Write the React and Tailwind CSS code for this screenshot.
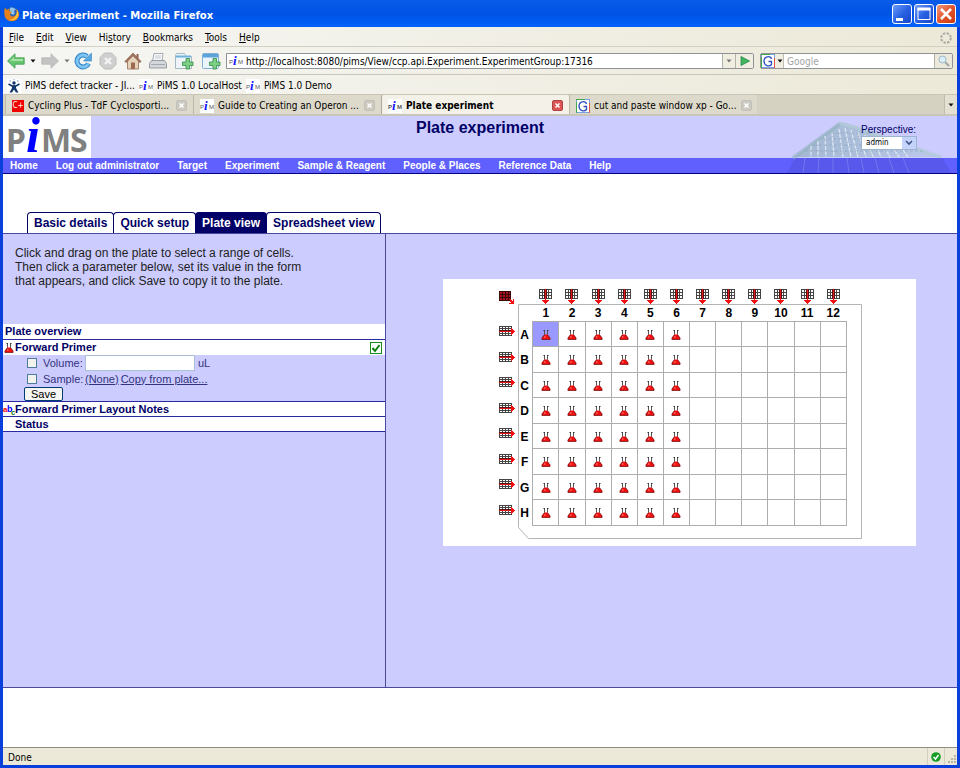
import React from "react";

const chromeFont = "font-['DejaVu_Sans_Condensed','DejaVu_Sans',sans-serif]";

const navLinks = [
  "Home",
  "Log out administrator",
  "Target",
  "Experiment",
  "Sample & Reagent",
  "People & Places",
  "Reference Data",
  "Help",
];

const columns = [1, 2, 3, 4, 5, 6, 7, 8, 9, 10, 11, 12];
const rows = ["A", "B", "C", "D", "E", "F", "G", "H"];

function Firefox() {
  return (
    <svg viewBox="0 0 16 16" className="h-4 w-4 shrink-0">
      <circle cx="8" cy="8" r="7" fill="#2c62b5" />
      <path d="M6 2c2-1 5 0 6 2-1 0-2 0-2 1 1 1 1 3-1 4L6 7z" fill="#8fc4ee" />
      <path
        d="M1 2c1 0 1 1 2 2 1-1 2-1 3-1L5 5l3 1-2 2c0 3 4 3 6 1 1-1 1-4 0-6 3 2 4 6 2 9-3 5-11 4-13-1C0 8 0 4 1 2z"
        fill="#e8801c"
      />
      <path d="M13 4c2 3 2 6 0 8-2 2-5 3-8 2 5 0 8-4 8-10z" fill="#fbc63a" />
    </svg>
  );
}

function PimsIcon() {
  return (
    <svg viewBox="0 0 14 14" className="h-[14px] w-[14px] shrink-0">
      <rect width="14" height="14" fill="#fff" />
      <text x="0" y="10" fontSize="6" fontFamily="Liberation Sans" fill="#555">P</text>
      <text x="4" y="11" fontSize="13" fontWeight="bold" fontStyle="italic" fontFamily="Liberation Serif" fill="#1414ff">i</text>
      <text x="9" y="10" fontSize="6" fontFamily="Liberation Sans" fill="#555">M</text>
    </svg>
  );
}

function GoogleIcon() {
  return (
    <svg viewBox="0 0 14 14" className="h-[14px] w-[14px] shrink-0">
      <rect x=".5" y=".5" width="13" height="13" fill="#fff" stroke="#7b9fe4" />
      <path d="M0 .5h9" stroke="#3fa84b" />
      <path d="M.5 3v11" stroke="#3fa84b" />
      <path d="M13.500 4v10" stroke="#e0553d" />
      <path d="M10.500 5C9.500 1.500 3 2 3 7s5.500 6 7.500 3.500V7.500H7.500" fill="none" stroke="#2d4fc0" strokeWidth="1.300" />
    </svg>
  );
}

function Arrow({ forward }) {
  return (
    <svg viewBox="0 0 18 16" className="h-4 w-[18px]">
      <path
        d={forward ? "M17.500 8 10 .800v4H.800v6.400H10v4z" : "M.500 8 8 .800v4h9.200v6.400H8v4z"}
        fill={forward ? "#c3c3c3" : "#67c56f"}
        stroke={forward ? "#b8b8b8" : "#3c9a50"}
        strokeWidth=".8"
      />
      {!forward && <path d="M3 8l4-4v2h9v2z" fill="#a5e3a4" />}
    </svg>
  );
}

function Reload() {
  return (
    <svg viewBox="0 0 18 18" className="h-[18px] w-[18px]">
      <path d="M14.500 11.500A6 6 0 1 1 13 4.500" fill="none" stroke="#2f83c8" strokeWidth="5" />
      <path d="M14.500 11.500A6 6 0 1 1 13 4.500" fill="none" stroke="#7cc4f1" strokeWidth="3" />
      <path d="M17.500 1v8H9.500z" fill="#57a9e2" stroke="#2f83c8" strokeWidth=".6" />
    </svg>
  );
}

function Stop() {
  return (
    <svg viewBox="0 0 18 18" className="h-[18px] w-[18px]">
      <path d="M5.500 1h7L17 5.500v7L12.500 17h-7L1 12.500v-7z" fill="#cfcfcf" stroke="#bcbcbc" />
      <path d="M6 6l6 6M12 6l-6 6" stroke="#f4f4f4" strokeWidth="2.400" />
    </svg>
  );
}

function HomeIcon() {
  return (
    <svg viewBox="0 0 18 18" className="h-[18px] w-[18px]">
      <path d="M12.500 2h2v4h-2z" fill="#93604a" />
      <path d="M3.500 8v9h11V8L9 2.500z" fill="#e6d2bb" stroke="#8f6c52" strokeWidth=".8" />
      <path d="M.800 9.500 9 1l8.200 8.500-1.400 1L9 3.800l-6.800 6.700z" fill="#a5755f" stroke="#7d5747" strokeWidth=".6" />
      <path d="M7 10.500h4V17H7z" fill="#9c6a50" />
    </svg>
  );
}

function PrintIcon() {
  return (
    <svg viewBox="0 0 18 18" className="h-[18px] w-[18px]">
      <path d="M5 1.500h9L13 9H3.500z" fill="#fbfbfb" stroke="#8f969e" strokeWidth=".8" />
      <path d="M6 4h6M5.700 6h6" stroke="#bcc5d0" />
      <path d="M2.500 8.500h13l2 3V16H.500v-4.500z" fill="#d3d6da" stroke="#858b93" strokeWidth=".8" />
      <path d="M2 12.500h14" stroke="#a2a8b0" />
    </svg>
  );
}

function NewPage({ win }) {
  return (
    <svg viewBox="0 0 20 18" className="h-[18px] w-5">
      {win ? (
        <>
          <rect x="1.500" y="1.500" width="16" height="15" rx="1" fill="#eaf4fb" stroke="#7fb0d4" />
          <path d="M2 2h15v3.500H2z" fill="#5ba3d8" />
        </>
      ) : (
        <>
          <path d="M1.500 3.500c0-1 .5-2 1.500-2h7c1 0 1.500 1 1.500 2v1h6v12h-16z" fill="#eef4f7" stroke="#a5b8c3" />
          <path d="M2 4.500h15" stroke="#6fb1dc" strokeWidth="2" />
        </>
      )}
      <path d="M12 6.500h3.500V10H19v3.500h-3.500V17H12v-3.500H8.500V10H12z" fill="#7fd087" stroke="#2f8d45" strokeWidth=".8" />
    </svg>
  );
}

function Caret({ light }) {
  return (
    <svg viewBox="0 0 6 4" className="h-1 w-[6px] shrink-0">
      <path d="M.500.500h5L3 3.500z" fill={light ? "#777" : "#111"} />
    </svg>
  );
}

function JiraIcon() {
  return (
    <svg viewBox="0 0 14 14" className="h-[14px] w-[14px] shrink-0">
      <rect width="14" height="14" fill="#fff" />
      <circle cx="7" cy="4" r="1.700" fill="#12386b" />
      <path d="M1.500 5 5 7h4l3.500-2" fill="none" stroke="#12386b" strokeWidth="1.600" />
      <path d="M5 6.500h4V9l2.500 4.500H9L7 10.500 5 13.500H2.500L5 9z" fill="#12386b" />
      <path d="M2.500 2h1.500M6.500.700h1M10 2h1.500" stroke="#6b8fc0" />
    </svg>
  );
}

function CloseX({ active }) {
  return (
    <button
      aria-label="Close tab"
      className={
        active
          ? "flex h-[11px] w-[11px] shrink-0 items-center justify-center rounded-[2px] border border-[#b04444] bg-[#dc5555]"
          : "flex h-[11px] w-[11px] shrink-0 items-center justify-center rounded-[2px] border border-[#c3c0b6] bg-[#cbc9c1]"
      }
    >
      <svg viewBox="0 0 7 7" className="h-[7px] w-[7px]">
        <path d="M1.500 1.500l4 4M5.500 1.500l-4 4" stroke="#fff" strokeWidth="1.500" />
      </svg>
    </button>
  );
}

function BrowserTab({ icon, title, active }) {
  return (
    <div
      className={
        "flex h-[19px] w-[188px] shrink-0 items-center gap-1 rounded-t-[2px] border-l px-[6px] pt-[2px] " +
        (active ? "border-[#aaa79b] bg-[#f3f1e8] font-bold" : "border-[#bdb9aa] bg-[#dedacb]")
      }
    >
      {icon}
      <span className="flex-1 whitespace-nowrap">{title}</span>
      <CloseX active={active} />
    </div>
  );
}

function WindowButton({ label, close, children }) {
  return (
    <button
      aria-label={label}
      className={
        "h-5 w-5 rounded-[3px] border border-white " +
        (close
          ? "bg-linear-to-br from-[#f09a7c] via-[#e2532b] to-[#c8390e]"
          : "bg-linear-to-br from-[#6e9bf8] via-[#2a62e4] to-[#1746c9]")
      }
    >
      <svg viewBox="0 0 18 18" className="h-[18px] w-[18px]">{children}</svg>
    </button>
  );
}

function Flask() {
  return (
    <svg viewBox="0 0 10 10" className="mx-auto block h-[10px] w-[10px]">
      <path d="M3.500.500v4M6.500.500v4" stroke="#555" />
      <path d="M2.500.500h1.500M6 .500h1.500" stroke="#333" />
      <path d="M3.500 4.500h3L9.200 8v1.500H.800V8z" fill="#f01010" />
      <path d="M3.500 4.500L1 8v1.500h8V8L6.500 4.500" fill="none" stroke="#6a0a0a" strokeWidth=".7" />
      <path d="M3 7h1.500" stroke="#ff9a9a" />
    </svg>
  );
}

function FillIcon({ kind }) {
  if (kind === "column") {
    return (
      <svg viewBox="0 0 13 15" className="mx-auto block h-[15px] w-[13px]" shapeRendering="crispEdges">
        <path d="M0 0h13v10H0z" fill="#fff" />
        <path d="M.500 0v10M3.500 0v10M9.500 0v10M12.500 0v10M0 .500h13M0 3.500h13M0 6.500h13M0 9.500h13" stroke="#444" />
        <path d="M5 0h3v10H5z" fill="#5a1216" />
        <path d="M6.500 0v10" stroke="#e01818" />
        <path d="M6 10h1v1h3v1H9v1H8v1H7v1H6v-1H5v-1H4v-1H3v-1h3z" fill="#f01010" />
      </svg>
    );
  }
  if (kind === "row") {
    return (
      <svg viewBox="0 0 16 11" className="block h-[11px] w-4" shapeRendering="crispEdges">
        <path d="M0 0h13v10H0z" fill="#fff" />
        <path d="M.500 0v10M3.500 0v10M6.500 0v10M9.500 0v10M12.500 0v10M0 .500h13M0 2.500h13M0 7.500h13M0 9.500h13" stroke="#444" />
        <path d="M0 4h12v2H0z" fill="#5a1216" />
        <path d="M0 5.500h13" stroke="#e01818" />
        <path d="M12 2h1v1h1v1h1v1h1v1h-1v1h-1v1h-1v1h-1z" fill="#f01010" />
      </svg>
    );
  }
  return (
    <svg viewBox="0 0 16 14" className="block h-[14px] w-4" shapeRendering="crispEdges">
      <path d="M0 1h12v10H0z" fill="#a5141a" />
      <path d="M.500 1v10M3.500 1v10M6.500 1v10M9.500 1v10M11.500 1v10M0 1.500h12M0 4.500h12M0 7.500h12M0 10.500h12" stroke="#3a0508" />
      <path d="M11 9h1v1h1v1h1v-2h1v5h-5v-1h2v-1h-1z" fill="#f01010" />
    </svg>
  );
}

function PlateTable() {
  return (
    <div className="relative h-[267px] w-[473px] bg-white">
      <svg viewBox="0 0 473 267" className="absolute inset-0 h-full w-full">
        <path d="M75.500 25.500h343v234h-333l-10-11z" fill="none" stroke="#b4b4b4" />
      </svg>
      <table className="relative ml-[54px] w-[350px] table-fixed border-collapse text-[12px] leading-[14px] font-bold text-black">
        <colgroup>
          <col className="w-5" />
          <col className="w-4" />
        </colgroup>
        <thead>
          <tr className="h-[26px]">
            <td className="p-0 pt-[10px] pl-[2px]">
              <button aria-label="Fill whole plate" className="block"><FillIcon kind="all" /></button>
            </td>
            <td className="p-0" />
            {columns.map((c) => (
              <td key={c} className="p-0 pt-2">
                <button aria-label={"Fill column " + c} className="mx-auto block"><FillIcon kind="column" /></button>
              </td>
            ))}
          </tr>
          <tr className="h-4">
            <td className="p-0" />
            <td className="p-0" />
            {columns.map((c) => (
              <th key={c} scope="col" className="p-0">{c}</th>
            ))}
          </tr>
        </thead>
        <tbody>
          {rows.map((r, i) => (
            <tr key={r} className={i % 2 ? "h-[26px]" : "h-[25px]"}>
              <td className="p-0 pb-1 pl-[2px]">
                <button aria-label={"Fill row " + r} className="block"><FillIcon kind="row" /></button>
              </td>
              <th scope="row" className="p-0 pt-[2px]">{r}</th>
              {columns.map((c) => (
                <td
                  key={c}
                  className={"border border-[#adadad] p-0 pt-[2px] " + (r === "A" && c === 1 ? "bg-[#9999ff]" : "")}
                >
                  {c <= 6 && <Flask />}
                </td>
              ))}
            </tr>
          ))}
        </tbody>
      </table>
    </div>
  );
}

function PageTab({ title, active }) {
  return (
    <button
      className={
        "h-[21px] rounded-t-[4px] border border-b-0 border-[#000066] px-[6px] text-[12px] font-bold " +
        (active ? "bg-[#000066] text-white" : "bg-white text-[#000066]")
      }
    >
      {title}
    </button>
  );
}

function Menu({ before = "", hot, after }) {
  return (
    <button className="whitespace-nowrap">
      {before}
      <span className="underline">{hot}</span>
      {after}
    </button>
  );
}

function Building() {
  return (
    <svg viewBox="0 0 172 52" className="pointer-events-none absolute right-0 bottom-px h-[52px] w-[172px]">
      <defs>
        <linearGradient id="roof" x1="0" y1="0" x2="1" y2="0">
          <stop offset="0" stopColor="#9db4cb" />
          <stop offset=".5" stopColor="#a9bfd6" />
          <stop offset="1" stopColor="#b9c6ea" />
        </linearGradient>
      </defs>
      <path d="M10 36 56 1l14 4 86 31z" fill="url(#roof)" opacity=".85" />
      <path d="M8 37 56 2" fill="none" stroke="#94b2c0" strokeWidth="4" opacity=".7" />
      <path d="M54 2l16 4 86 30" fill="none" stroke="#b3cbd8" strokeWidth="3" opacity=".8" />
      <path
        d="M33 20v16M40 15l1 21M47 11l2 25M54 8l4 28M60 7l6 29M66 9l7 27M73 11l8 25M80 14l8 22M88 17l8 19M97 21l8 15M107 25l7 11M118 29l5 7M26 25v11"
        stroke="#dfeaf4"
        strokeWidth="1.200"
        strokeDasharray="4 1"
      />
      <path d="M20 30h118M29 24h95M38 18h70M46 12h42" stroke="#8aa3bd" strokeWidth=".8" strokeDasharray="3 2" opacity=".7" />
      <path d="M10 37h148l8 15H2z" fill="#5050d6" opacity=".45" />
      <path d="M20 37l-2 15M34 37l-1 15M48 37v15M62 37l2 15M76 37l3 15M90 37l4 15M104 37l5 15M118 37l6 15" stroke="#7d85ee" opacity=".7" />
    </svg>
  );
}

export default function App() {
  return (
    <div className="flex min-h-screen flex-col bg-[#0a3fdc] px-[3px] pb-[3px] font-['Liberation_Sans',Arial,sans-serif]">
      <header className={"-mx-[3px] flex h-[27px] items-center gap-[2px] bg-linear-to-b from-[#0a5be8] via-[#0053e4] to-[#0062fb] pr-1 pl-1 " + chromeFont}>
        <Firefox />
        <h1 className="flex-1 pt-1 text-[10px] font-bold text-white font-['DejaVu_Sans',sans-serif]">
          Plate experiment - Mozilla Firefox
        </h1>
        <div className="flex gap-[2px]">
          <WindowButton label="Minimize"><path d="M3 14.500h7" stroke="#fff" strokeWidth="3" /></WindowButton>
          <WindowButton label="Maximize">
            <rect x="3" y="3.500" width="12" height="11" fill="none" stroke="#fff" />
            <path d="M2.500 4h13" stroke="#fff" strokeWidth="3" />
          </WindowButton>
          <WindowButton label="Close" close><path d="M4 4l10 10M14 4L4 14" stroke="#fff" strokeWidth="2.600" /></WindowButton>
        </div>
      </header>

      <div className={"bg-linear-to-r from-[#f6f6f4] to-[#ece9d8] text-[10px] text-black " + chromeFont}>
        <nav className="flex h-5 items-center gap-3 border-b border-[#d3d0c3] pt-[2px] pr-1 pl-[6px]">
          <Menu hot="F" after="ile" />
          <Menu hot="E" after="dit" />
          <Menu hot="V" after="iew" />
          <Menu before="Hi" hot="s" after="tory" />
          <Menu hot="B" after="ookmarks" />
          <Menu hot="T" after="ools" />
          <Menu hot="H" after="elp" />
          <svg viewBox="0 0 14 14" className="ml-auto h-[14px] w-[14px]">
            <circle cx="7" cy="7" r="4.800" fill="none" stroke="#aaa9a4" strokeWidth="2" strokeDasharray="2.400 1.370" />
          </svg>
        </nav>

        <div className="flex h-7 items-center border-b border-[#c9c6b9] pr-1 pl-1">
          <button aria-label="Back"><Arrow /></button>
          <span className="flex w-4 justify-center"><Caret /></span>
          <button aria-label="Forward"><Arrow forward /></button>
          <span className="flex w-[15px] justify-center"><Caret light /></span>
          <div className="flex gap-[7px]">
            <button aria-label="Reload"><Reload /></button>
            <button aria-label="Stop"><Stop /></button>
            <button aria-label="Home"><HomeIcon /></button>
            <button aria-label="Print"><PrintIcon /></button>
            <button aria-label="New tab"><NewPage /></button>
            <button aria-label="New window"><NewPage win /></button>
          </div>
          <div className="ml-[5px] flex h-4 flex-1 items-stretch rounded-r-[2px] border border-[#8f9297] bg-white">
            <span className="flex items-center pl-[2px]"><PimsIcon /></span>
            <input
              aria-label="Address"
              defaultValue="http://localhost:8080/pims/View/ccp.api.Experiment.ExperimentGroup:17316"
              className="min-w-0 flex-1 bg-transparent pt-px pl-[3px] outline-none"
            />
            <button aria-label="Show history" className="flex w-[13px] items-center justify-center border-l border-[#b4b2a8] bg-[#f0ede1]"><Caret light /></button>
            <button aria-label="Go" className="flex w-[18px] items-center justify-center rounded-r-[2px] border-l border-[#b4b2a8] bg-[#f0ede1]">
              <svg viewBox="0 0 10 10" className="h-[10px] w-[10px]"><path d="M1 .500 9.500 5 1 9.500z" fill="#43b561" stroke="#23864a" strokeWidth=".8" /></svg>
            </button>
          </div>
          <div className="ml-[6px] flex h-4 w-[193px] items-stretch rounded-[2px] border border-[#8f9297] bg-white">
            <button aria-label="Choose search engine" className="flex w-[23px] items-center justify-center gap-[2px] rounded-l-[2px] border-r border-[#c0beb4] bg-[#f0ede1]">
              <GoogleIcon />
              <Caret />
            </button>
            <input aria-label="Search" placeholder="Google" className="min-w-0 flex-1 pt-px pl-[3px] outline-none placeholder:text-[#a3a3a3]" />
            <button aria-label="Search the web" className="flex w-[18px] items-center justify-center rounded-r-[2px] border-l border-[#b4b2a8] bg-[#ece9dc]">
              <svg viewBox="0 0 12 12" className="h-3 w-3">
                <path d="M7 7l4 4" stroke="#a0a4a8" strokeWidth="2" />
                <circle cx="4.500" cy="4.500" r="3.500" fill="#d9eefa" stroke="#a0b7c6" />
              </svg>
            </button>
          </div>
        </div>

        <div className="flex h-5 items-center gap-1 border-b border-[#c9c5b5] pt-[2px] pl-1">
          <a href="#jira" className="flex items-center gap-1"><JiraIcon />PiMS defect tracker - JI...</a>
          <a href="#local" className="flex items-center gap-1"><PimsIcon />PiMS 1.0 LocalHost</a>
          <a href="#demo" className="flex items-center gap-1"><PimsIcon />PiMS 1.0 Demo</a>
        </div>

        <div className="flex h-[21px] items-end border-b-2 border-[#c9c5b8] bg-[#d6d2c2] pl-[2px]">
          <BrowserTab
            title="Cycling Plus - TdF Cyclosporti..."
            icon={<span className="flex h-3 w-3 shrink-0 items-center justify-center bg-[#f00000] text-[8px] text-white">C+</span>}
          />
          <BrowserTab title="Guide to Creating an Operon ..." icon={<PimsIcon />} />
          <BrowserTab title="Plate experiment" icon={<PimsIcon />} active />
          <BrowserTab title="cut and paste window xp - Go..." icon={<GoogleIcon />} />
          <button aria-label="List all tabs" className="ml-auto flex h-[19px] w-[13px] items-center justify-center border-l border-[#c0bcad] bg-[#e4e0d2]"><Caret /></button>
        </div>
      </div>

      <main className="flex flex-1 flex-col bg-white">
        <div className="relative">
          <div className="flex h-[42px] items-start justify-between bg-[#ccccff]">
            <svg viewBox="0 0 88 42" className="h-[42px] w-[88px]" role="img" aria-label="PiMS">
              <rect width="88" height="42" fill="#fff" />
              <g fontFamily="Noto Sans" fontWeight="bold" fontSize="32" fill="#808080">
                <text x="3" y="36">P</text>
                <text x="38" y="36">M</text>
                <text x="67" y="36">S</text>
              </g>
              <text x="23" y="36" fontFamily="Liberation Serif" fontWeight="bold" fontStyle="italic" fontSize="50" fill="#0000ff">i</text>
            </svg>
            <h2 className="pt-[2px] pl-2 text-[16px] leading-5 font-bold text-[#000066]">Plate experiment</h2>
            <div className="relative z-10 flex w-24 flex-col items-start pt-2 text-[10px] leading-3 text-[#000066]">
              <label htmlFor="perspective">Perspective:</label>
              <div className="relative">
                <select id="perspective" className={"block h-[14px] w-14 appearance-none border border-[#9db4cf] bg-white pl-1 text-[8px] leading-[12px] text-black " + chromeFont}>
                  <option>admin</option>
                </select>
                <span className="pointer-events-none absolute top-px right-px flex h-3 w-[14px] items-center justify-center bg-[#c3d3fc]">
                  <svg viewBox="0 0 8 6" className="h-[6px] w-2"><path d="M1 1l3 3 3-3" fill="none" stroke="#3f5684" strokeWidth="1.600" /></svg>
                </span>
              </div>
            </div>
          </div>
          <nav className="flex h-4 items-center gap-[18px] border-b border-[#000080] bg-[#6060ff] pl-[7px] text-[10px] font-bold whitespace-nowrap text-white">
            {navLinks.map((l) => (
              <a key={l} href="#nav">{l}</a>
            ))}
          </nav>
          <Building />
        </div>

        <div className="flex items-end -space-x-px px-6 pt-[38px]">
          <PageTab title="Basic details" />
          <PageTab title="Quick setup" />
          <PageTab title="Plate view" active />
          <PageTab title="Spreadsheet view" />
        </div>

        <div className="flex min-h-[455px] border-y border-[#4a4a9c] bg-[#ccccff]">
          <section className="box-content w-2/5 border-r border-[#4a4a9c] text-[11px] text-[#000066]">
            <p className="h-[90px] px-3 pt-3 text-[12px] leading-[14px] text-[#222]">
              Click and drag on the plate to select a range of cells.<br />
              Then click a parameter below, set its value in the form<br />
              that appears, and click Save to copy it to the plate.
            </p>
            <h3 className="h-4 border-b border-[#2a2aa0] bg-white pl-[2px] leading-[15px] font-bold">Plate overview</h3>
            <div className="flex h-[15px] items-center bg-white pr-[3px] pl-px font-bold">
              <span><Flask /></span>
              <span className="pl-px">Forward Primer</span>
              <svg viewBox="0 0 12 12" className="ml-auto h-3 w-3">
                <rect x=".5" y=".5" width="11" height="11" fill="#fff" stroke="#149014" />
                <path d="M2.500 6l2.500 3 4.500-6" fill="none" stroke="#0a800a" strokeWidth="2" />
              </svg>
            </div>
            <form className="h-[47px] border-b border-[#2a2aa0] pl-6 text-[11px] text-[#333380]" onSubmit={(e) => e.preventDefault()}>
              <div className="flex h-4 items-center">
                <input aria-label="Set volume" type="checkbox" className="h-[10px] w-[10px] appearance-none border border-[#4f7ba0] bg-[#f3f3ee]" />
                <label htmlFor="volume" className="w-12 pl-[6px]">Volume:</label>
                <input id="volume" className="h-4 w-[110px] border border-[#a9c0d6] bg-white px-1 outline-none" />
                <span className="pl-[3px]">uL</span>
              </div>
              <div className="flex h-4 items-center">
                <input id="useSample" type="checkbox" className="h-[10px] w-[10px] appearance-none border border-[#4f7ba0] bg-[#f3f3ee]" />
                <label htmlFor="useSample" className="w-12 pl-[6px]">Sample:</label>
                <a href="#none" className="underline">(None)</a>
                <a href="#copy" className="ml-[2px] underline">Copy from plate...</a>
              </div>
              <button className="-ml-[3px] flex h-[14px] w-[39px] items-center justify-center rounded-[2px] border border-[#003c74] bg-[#f5f5f1] text-[11px] text-black">Save</button>
            </form>
            <h3 className="flex h-[15px] items-center border-b border-[#2a2aa0] bg-white pt-px font-bold">
              <svg viewBox="0 0 12 12" className="h-3 w-3">
                <text x="0" y="8" fontSize="8" fontFamily="Liberation Sans" fontWeight="bold" fill="#f00000">a</text>
                <text x="4" y="8" fontSize="9" fontFamily="Liberation Sans" fontWeight="bold" fill="#0000f0">b</text>
                <text x="8" y="11" fontSize="8" fontFamily="Liberation Sans" fontWeight="bold" fill="#108010">c</text>
              </svg>
              Forward Primer Layout Notes
            </h3>
            <h3 className="flex h-[15px] items-center border-b border-[#2a2aa0] bg-white pt-px pl-3 font-bold">Status</h3>
          </section>
          <section className="flex flex-1 items-start justify-center pt-[45px] pl-4">
            <PlateTable />
          </section>
        </div>
        <div className="flex-1" />
      </main>

      <footer className={"flex h-[18px] items-center border-t border-[#908d80] bg-[#ece9d8] pl-[5px] text-[10px] text-black " + chromeFont}>
        <span className="flex-1 pt-px">Done</span>
        <span className="flex h-full w-[18px] items-center justify-center border-x border-[#d3cfbe]">
          <svg viewBox="0 0 10 10" className="h-[10px] w-[10px]">
            <circle cx="5" cy="5" r="4.800" fill="#159c25" />
            <path d="M2.500 5l2 2 3-4" fill="none" stroke="#fff" strokeWidth="1.500" />
          </svg>
        </span>
        <svg viewBox="0 0 12 12" className="mt-1 h-3 w-3">
          <path d="M9 3h2M6 6h2M9 6h2M3 9h2M6 9h2M9 9h2" stroke="#b8b4a2" strokeWidth="2" />
        </svg>
      </footer>
    </div>
  );
}
